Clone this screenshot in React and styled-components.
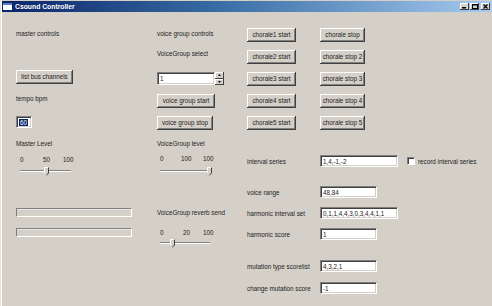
import React from 'react';
import styled, { createGlobalStyle } from 'styled-components';

const Global = createGlobalStyle`
  html, body { margin: 0; padding: 0; background: #d4d0c8; }
  body { font-family: "Liberation Sans", Arial, sans-serif; }
  * { box-sizing: border-box; }
`;

const Window = styled.div`
  width: 492px;
  height: 306px;
  background: #d4d0c8;
  padding: 1px 0 0 2px;
  overflow: hidden;
  box-shadow: inset 1px 0 0 #e4e2dc, inset 2px 0 0 #ffffff;
  display: flex;
  flex-direction: column;
`;

const TitleBar = styled.div`
  height: 11px;
  display: flex;
  align-items: center;
  padding: 0 2px 0 1px;
  background: linear-gradient(to right, #0a246a 0%, #3a6ea5 45%, #a6caf0 100%);
  color: #fff;
  font-weight: bold;
  font-size: 6.8px;
  white-space: nowrap;
`;

const Title = styled.span`
  margin-left: 3px;
  flex: 1;
`;

const Controls = styled.div`
  display: flex;
  gap: 1px;
`;

const CtlButton = styled.div`
  width: 9px;
  height: 7px;
  margin-left: ${p => p.$ml || 0}px;
  background: #d4d0c8;
  box-shadow: inset -1px -1px 0 #404040, inset 1px 1px 0 #fff;
  display: flex;
  align-items: center;
  justify-content: center;
`;

const Body = styled.div`
  flex: 1;
  display: flex;
  padding-left: 14px;
  color: #222;
  font-size: 6.3px;
`;

const Column = styled.div`
  width: ${p => (p.$w ? `${p.$w}px` : 'auto')};
  flex: ${p => (p.$w ? 'none' : 1)};
  display: flex;
  flex-direction: column;
  align-items: flex-start;
`;

const Label = styled.div`
  margin-top: ${p => p.$mt || 0}px;
  height: 9px;
  line-height: 9px;
  white-space: nowrap;
`;

const Button = styled.div`
  margin-top: ${p => p.$mt || 0}px;
  width: ${p => p.$w}px;
  height: 14px;
  background: #d4d0c8;
  box-shadow: inset -1px -1px 0 #404040, inset 1px 1px 0 #fff, inset -2px -2px 0 #808080;
  display: flex;
  align-items: center;
  justify-content: center;
  white-space: nowrap;
  color: #222;
  padding-bottom: 1px;
`;

const Field = styled.div`
  margin-top: ${p => p.$mt || 0}px;
  margin-left: ${p => p.$ml || 0}px;
  width: ${p => p.$w}px;
  height: ${p => p.$h || 12}px;
  background: #fff;
  border-top: 1px solid #808080;
  border-left: 1px solid #808080;
  border-right: 1px solid #fff;
  border-bottom: 1px solid #fff;
  box-shadow: inset 1px 1px 0 #404040, inset -1px -1px 0 #d4d0c8;
  padding: 0 2px;
  display: flex;
  align-items: center;
  white-space: nowrap;
  color: #222;
  flex: none;
`;

const Selected = styled.span`
  background: #0a246a;
  color: #fff;
  padding: 0 1px;
`;

const Spin = styled.div`
  margin-top: ${p => p.$mt || 0}px;
  display: flex;
`;

const SpinButtons = styled.div`
  width: 9px;
  height: 13px;
  display: flex;
  flex-direction: column;
`;

const SpinBtn = styled.div`
  flex: 1;
  background: #d4d0c8;
  box-shadow: inset -1px -1px 0 #404040, inset 1px 1px 0 #fff;
  display: flex;
  align-items: center;
  justify-content: center;
`;

const Ticks = styled.div`
  margin-top: ${p => p.$mt || 0}px;
  display: flex;
  height: 9px;
  line-height: 9px;
`;

const Tick = styled.span`
  margin-left: ${p => p.$ml}px;
`;

const SliderBox = styled.div`
  position: relative;
  margin-top: ${p => p.$mt || 0}px;
  margin-left: ${p => p.$ml}px;
  width: ${p => p.$w}px;
  height: 10px;
`;

const Track = styled.div`
  margin-top: 4px;
  height: 2px;
  border-top: 1px solid #808080;
  border-bottom: 1px solid #fff;
`;

const Thumb = styled.svg`
  position: absolute;
  top: 1px;
`;

const Progress = styled.div`
  margin-top: ${p => p.$mt || 0}px;
  width: 116px;
  height: 9px;
  border-top: 1px solid #808080;
  border-left: 1px solid #808080;
  border-right: 1px solid #fff;
  border-bottom: 1px solid #fff;
  box-shadow: inset 0 1px 0 #e8e6e0;
`;

const ButtonGrid = styled.div`
  margin-top: 16px;
  display: grid;
  grid-template-columns: 49px 45px;
  column-gap: 24px;
  row-gap: 8px;
`;

const FormRow = styled.div`
  margin-top: ${p => p.$mt}px;
  height: 12px;
  display: flex;
  align-items: center;
`;

const RowLabel = styled.div`
  width: 73px;
  white-space: nowrap;
`;

const Check = styled.div`
  width: 8px;
  height: 8px;
  margin-left: 9px;
  background: #fff;
  border-top: 1px solid #808080;
  border-left: 1px solid #808080;
  border-right: 1px solid #fff;
  border-bottom: 1px solid #fff;
  box-shadow: inset 1px 1px 0 #404040;
`;

const CheckLabel = styled.span`
  margin-left: 3px;
  white-space: nowrap;
`;

function Slider({ ml, w, thumb, mt }) {
  return (
    <SliderBox $ml={ml} $w={w} $mt={mt}>
      <Track />
      <Thumb width="5" height="9" viewBox="0 0 5 9" style={{ left: thumb }}>
        <path d="M0 0 H5 V6 L2.5 8.5 L0 6 Z" fill="#d4d0c8" />
        <path d="M0.5 6 V0.5 H4.5" stroke="#fff" fill="none" strokeWidth="1" />
        <path d="M4.5 0.5 V6 L2.5 8.3" stroke="#404040" fill="none" strokeWidth="1" />
      </Thumb>
    </SliderBox>
  );
}

const choraleRows = [
  ['chorale1 start', 'chorale stop'],
  ['chorale2 start', 'chorale stop 2'],
  ['chorale3 start', 'chorale stop 3'],
  ['chorale4 start', 'chorale stop 4'],
  ['chorale5 start', 'chorale stop 5'],
];

export default function App() {
  return (
    <>
      <Global />
      <Window>
        <TitleBar>
          <svg width="9" height="7" viewBox="0 0 9 7">
            <rect x="0" y="0" width="9" height="7" fill="#ffffff" />
            <rect x="0" y="0" width="9" height="2" fill="#5a7fc0" />
          </svg>
          <Title>Csound Controller</Title>
          <Controls>
            <CtlButton>
              <svg width="5" height="5" viewBox="0 0 5 5"><rect x="0" y="3" width="4" height="1.5" fill="#000" /></svg>
            </CtlButton>
            <CtlButton>
              <svg width="6" height="5" viewBox="0 0 6 5"><rect x="0.5" y="0.5" width="5" height="4" fill="none" stroke="#000" strokeWidth="1" /><rect x="0" y="0" width="6" height="1.5" fill="#000" /></svg>
            </CtlButton>
            <CtlButton $ml={1}>
              <svg width="5" height="5" viewBox="0 0 5 5"><path d="M0.5 0.5 L4.5 4.5 M4.5 0.5 L0.5 4.5" stroke="#000" strokeWidth="1.2" /></svg>
            </CtlButton>
          </Controls>
        </TitleBar>
        <Body>
          <Column $w={141}>
            <Label $mt={17}>master controls</Label>
            <Button $mt={32} $w={57}>list bus channels</Button>
            <Label $mt={10}>tempo bpm</Label>
            <Field $mt={13} $w={16} $h={12}><Selected>60</Selected></Field>
            <Label $mt={11}>Master Level</Label>
            <Ticks $mt={7}>
              <Tick $ml={4}>0</Tick>
              <Tick $ml={19.5}>50</Tick>
              <Tick $ml={13}>100</Tick>
            </Ticks>
            <Slider mt={2} ml={4} w={51} thumb={24} />
            <Progress $mt={32} />
            <Progress $mt={11} />
          </Column>
          <Column $w={90}>
            <Label $mt={17}>voice group controls</Label>
            <Label $mt={11}>VoiceGroup select</Label>
            <Spin $mt={14}>
              <Field $w={58} $h={13}>1</Field>
              <SpinButtons>
                <SpinBtn>
                  <svg width="3" height="2" viewBox="0 0 3 2"><path d="M0 2 L1.5 0 L3 2 Z" fill="#000" /></svg>
                </SpinBtn>
                <SpinBtn>
                  <svg width="3" height="2" viewBox="0 0 3 2"><path d="M0 0 L1.5 2 L3 0 Z" fill="#000" /></svg>
                </SpinBtn>
              </SpinButtons>
            </Spin>
            <Button $mt={9} $w={58}>voice group start</Button>
            <Button $mt={8} $w={56}>voice group stop</Button>
            <Label $mt={9}>VoiceGroup level</Label>
            <Ticks $mt={6}>
              <Tick $ml={3}>0</Tick>
              <Tick $ml={17.5}>100</Tick>
              <Tick $ml={11.5}>100</Tick>
            </Ticks>
            <Slider mt={3} ml={3} w={50} thumb={47} />
            <Label $mt={32}>VoiceGroup reverb send</Label>
            <Ticks $mt={11}>
              <Tick $ml={3}>0</Tick>
              <Tick $ml={19.5}>20</Tick>
              <Tick $ml={13}>100</Tick>
            </Ticks>
            <Slider mt={1} ml={3} w={50} thumb={10} />
          </Column>
          <Column>
            <ButtonGrid>
              {choraleRows.map(([a, b]) => (
                <React.Fragment key={a}>
                  <Button $w={49}>{a}</Button>
                  <Button $w={45}>{b}</Button>
                </React.Fragment>
              ))}
            </ButtonGrid>
            <FormRow $mt={25}>
              <RowLabel>interval series</RowLabel>
              <Field $w={78}>1,4,-1,-2</Field>
              <Check />
              <CheckLabel>record interval series</CheckLabel>
            </FormRow>
            <FormRow $mt={19}>
              <RowLabel>voice range</RowLabel>
              <Field $w={57}>48,84</Field>
            </FormRow>
            <FormRow $mt={9}>
              <RowLabel>harmonic interval set</RowLabel>
              <Field $w={78}>0,1,1,4,4,3,0,3,4,4,1,1</Field>
            </FormRow>
            <FormRow $mt={9}>
              <RowLabel>harmonic score</RowLabel>
              <Field $w={57}>1</Field>
            </FormRow>
            <FormRow $mt={20}>
              <RowLabel>mutation type scorelist</RowLabel>
              <Field $w={57}>4,3,2,1</Field>
            </FormRow>
            <FormRow $mt={10}>
              <RowLabel>change mutation score</RowLabel>
              <Field $w={57}>-1</Field>
            </FormRow>
          </Column>
        </Body>
      </Window>
    </>
  );
}
